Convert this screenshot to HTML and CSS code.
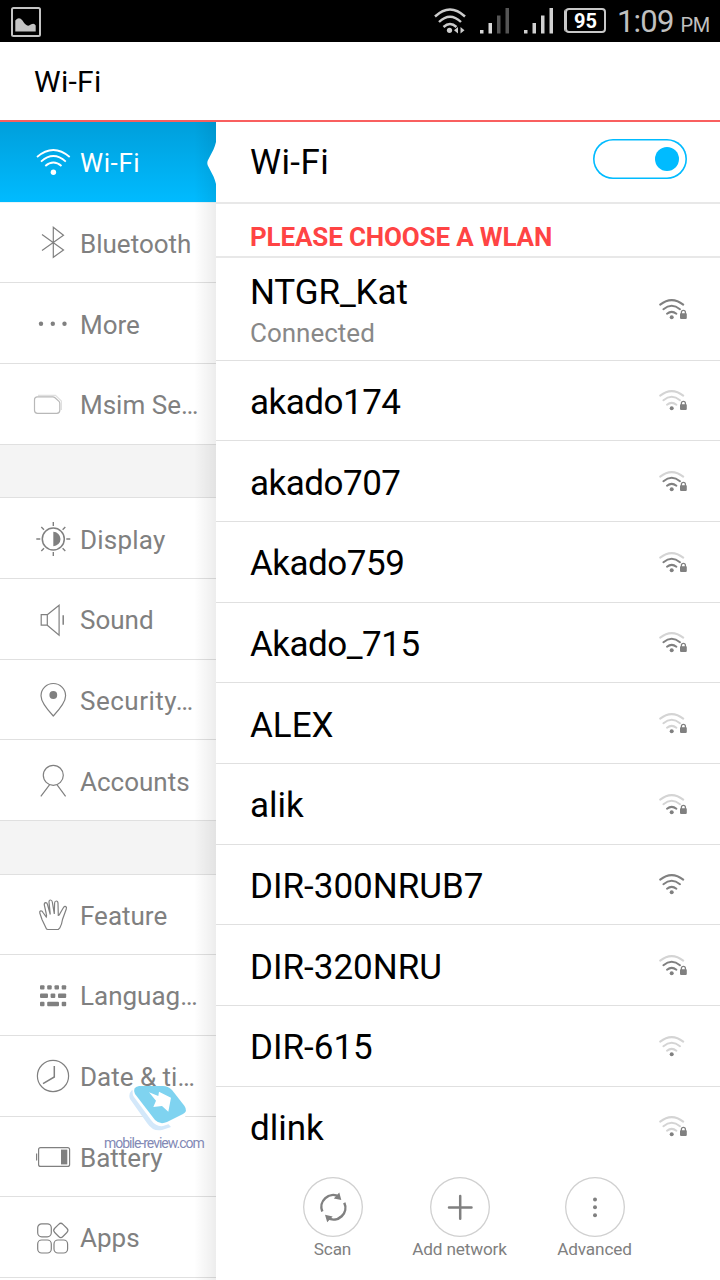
FILE: index.html
```html
<!DOCTYPE html>
<html lang="en">
<head>
  <meta charset="UTF-8">
  <title>Wi-Fi</title>
  <link rel="stylesheet" href="styles.css">
</head>
<body>

  <!-- shared shapes -->
  <svg class="defs" width="0" height="0">
    <symbol id="signal" viewBox="0 0 28 24">
      <path class="arc arc-3" d="M1.2 7.6Q12.7 -1.4 24.2 7.6"/>
      <path class="arc arc-2" d="M4.4 12.2Q12.7 5.4 21 12.2"/>
      <path class="arc arc-1" d="M8 16.7Q12.7 13 17.4 16.7"/>
      <circle cx="12.7" cy="20.2" r="2"/>
    </symbol>
    <symbol id="lock" viewBox="0 0 28 24">
      <rect x="21" y="16.3" width="6.8" height="5.6" rx=".8"/>
      <path class="shackle" d="M22.4 17V15.3a2 2 0 0 1 4 0V17"/>
    </symbol>
  </svg>

  <!-- STATUS BAR -->
  <div class="status-bar">
    <svg class="status-picture" width="30" height="30" viewBox="0 0 30 30">
      <rect x="1" y="1" width="28" height="28" rx="1.5" fill="none" stroke="#c4c4c4" stroke-width="2"/>
      <path d="M4.3 24.5V13.5Q8 9 11.5 13.5Q15 19.5 18 18.5Q23 15 24.7 18.5V24.5Z" fill="#c4c4c4"/>
    </svg>
    <div class="status-icons">
      <svg width="32" height="28" viewBox="0 0 32 28">
        <g fill="none" stroke="#ccc" stroke-width="2.4">
          <path d="M1 8.5Q16 -5.5 31 8.5"/>
          <path d="M5 14Q16 3.5 27 14"/>
          <path d="M9.5 19Q16 13 22.5 19"/>
        </g>
        <circle cx="15.5" cy="22.3" r="2.6" fill="#ccc"/>
        <path d="M24 19V25.5L20 22.3ZM26.5 19V25.5L30.5 22.3Z" fill="#ccc"/>
      </svg>
      <svg class="bars" width="30" height="26" viewBox="0 0 30 26">
        <path d="M0 22h3.5v3.5H0zM8.5 15H12v10.5H8.5z" fill="#d8d8d8"/>
        <path d="M17 7.5h3.5v18H17zM25.5 0H29v25.5h-3.5z" fill="#555"/>
      </svg>
      <svg class="bars" width="30" height="26" viewBox="0 0 30 26">
        <path d="M0 22h3.5v3.5H0zM8.5 15H12v10.5H8.5zM17 7.5h3.5v18H17zM25.5 0H29v25.5h-3.5z" fill="#d0d0d0"/>
      </svg>
      <div class="battery">95</div>
      <div class="clock">1:09 <small>PM</small></div>
    </div>
  </div>

  <div class="title-bar"><h1>Wi-Fi</h1></div>

  <div class="content">

    <!-- SIDEBAR -->
    <div class="sidebar">
      <div class="menu-item active">
        <svg viewBox="0 0 40 40">
          <path d="M4 15Q20.3 1 36.7 15M8 19.6Q20.3 8.4 32.8 19.6M12.3 24Q20.4 17 28.5 24"/>
          <circle class="solid" cx="20.4" cy="30.3" r="2.7"/>
        </svg>
        <span>Wi-Fi</span>
      </div>
      <div class="menu-item">
        <svg viewBox="0 0 40 40"><path d="M9 11.5L30.5 27L20.3 34.3V4.3L30.5 12.3L9 27.5"/></svg>
        <span>Bluetooth</span>
      </div>
      <div class="menu-item">
        <svg viewBox="0 0 40 40">
          <g class="solid"><circle cx="8" cy="19.7" r="2.2"/><circle cx="19.8" cy="19.7" r="2.2"/><circle cx="31.5" cy="19.7" r="2.2"/></g>
        </svg>
        <span>More</span>
      </div>
      <div class="menu-item">
        <svg viewBox="0 0 40 40">
          <path class="faint" d="M5 10.3H22.5L28.4 16V25"/>
          <path class="pale" d="M4.5 11.8H19.8Q21 11.8 22 12.7L26 16.3Q26.8 17.2 26.8 18.5V25.3Q26.8 28.3 23.8 28.3H4.5Q1.5 28.3 1.5 25.3V14.8Q1.5 11.8 4.5 11.8Z"/>
        </svg>
        <span>Msim Se…</span>
      </div>

      <div class="divider"></div>

      <div class="menu-item">
        <svg viewBox="0 0 40 40">
          <circle cx="20.3" cy="20" r="11" stroke-width="1.5"/>
          <path class="solid" d="M20.3 12.8a7.2 7.2 0 0 1 0 14.4Z"/>
          <path d="M20.3 3V7M20.3 33V37M3.3 20H7.3M33.3 20H37.3M8.3 8L11 10.7M32.3 8L29.6 10.7M8.3 32L11 29.3M32.3 32L29.6 29.3" stroke-width="1.4"/>
        </svg>
        <span class="wide">Display</span>
      </div>
      <div class="menu-item">
        <svg viewBox="0 0 40 40">
          <path d="M8.2 14.7H14.3V25.2H8.2ZM14.3 14.7L26.1 5.2V35.2L14.3 25.2"/>
          <path d="M30.2 15.2V24.8" stroke-width="1.5"/>
        </svg>
        <span>Sound</span>
      </div>
      <div class="menu-item">
        <svg viewBox="0 0 40 40">
          <path d="M20.3 36Q8 23 8 15.8A12.3 12.3 0 0 1 32.6 15.8Q32.6 23 20.3 36Z"/>
          <circle class="solid" cx="20.3" cy="15" r="3.9"/>
        </svg>
        <span class="wider">Security…</span>
      </div>
      <div class="menu-item">
        <svg viewBox="0 0 40 40">
          <circle cx="20.3" cy="14.3" r="10"/>
          <path d="M16.5 23.8L7.8 35.3M24.1 23.8L32.6 35.3"/>
        </svg>
        <span>Accounts</span>
      </div>

      <div class="divider"></div>

      <div class="menu-item">
        <svg viewBox="0 0 40 40">
          <path d="M13.5 34L9 24.5L6.8 18Q6.5 15.8 8 15.8Q9.3 15.8 10 17.5L13.3 22Q13.8 21 13.3 19L11.3 10Q11 7.8 12.7 7.6Q14 7.6 14.5 9.5L17.3 19.5L16 7Q16 5 17.5 5Q19 5 19.3 7L21.3 19L21.6 8Q21.8 6 23.3 6Q25 6 25 8.3L25.3 20.5Q26.3 20.5 27 18.5L30.5 12.5Q31.5 11 32.8 11.6Q34 12.2 33.2 14.3L29.5 24.5Q28.8 29.5 26.8 33L25.3 34.5H14.8Z"/>
        </svg>
        <span>Feature</span>
      </div>
      <div class="menu-item">
        <svg viewBox="0 0 40 40">
          <g class="solid">
            <rect x="7" y="9.2" width="4.5" height="4.4" rx="1"/><rect x="14.2" y="9.2" width="4.5" height="4.4" rx="1"/>
            <rect x="21.5" y="9.2" width="4.5" height="4.4" rx="1"/><rect x="28.7" y="9.2" width="4.5" height="4.4" rx="1"/>
            <rect x="7" y="17.6" width="8" height="4.4" rx="1"/><rect x="17.6" y="17.6" width="4.7" height="4.4" rx="1"/>
            <rect x="25" y="17.6" width="8.2" height="4.4" rx="1"/><rect x="7" y="25.8" width="4.5" height="4.4" rx="1"/>
            <rect x="14.2" y="25.8" width="11.8" height="4.4" rx="1"/><rect x="28.7" y="25.8" width="4.5" height="4.4" rx="1"/>
          </g>
        </svg>
        <span>Languag…</span>
      </div>
      <div class="menu-item">
        <svg viewBox="0 0 40 40">
          <circle cx="20" cy="20" r="15.6"/>
          <path d="M21.3 10V21L10 27.6" stroke-width="1.5"/>
        </svg>
        <span>Date &amp; ti…</span>
      </div>
      <div class="menu-item">
        <svg viewBox="0 0 40 40">
          <rect x="5.6" y="10.6" width="31" height="18.8" rx="2"/>
          <rect class="solid" x="28" y="12.6" width="6.3" height="14.8"/>
          <path d="M3.6 16.5V23.5"/>
        </svg>
        <span>Battery</span>
      </div>
      <div class="menu-item">
        <svg viewBox="0 0 40 40">
          <rect x="4.7" y="5.8" width="13.6" height="13" rx="4"/>
          <rect x="4.7" y="22" width="13.6" height="13" rx="4"/>
          <rect x="21" y="22" width="13.6" height="13" rx="4"/>
          <rect x="22" y="6.6" width="11.6" height="11.6" rx="3" transform="rotate(45 27.8 12.4)"/>
        </svg>
        <span>Apps</span>
      </div>

      <div class="shade"></div>
      <svg class="pointer" width="9" height="42" viewBox="0 0 9 42"><path d="M9 0V42Q8 38 6.5 34.5L.8 23.5Q-.2 21 .8 18.5L6.5 7.5Q8 4 9 0Z"/></svg>

      <div class="watermark">
        <svg width="60" height="50" viewBox="0 0 60 50">
          <path d="M3 5Q-1 9 1 14L18 38Q24 47 33 45L42 42L20 18Z" fill="#d3e8fa"/>
          <path d="M5 3Q2 7 5 12L22 35Q27 42 34 41L52 35Q58 32 57 27L45 12Z" fill="#fff"/>
          <path d="M10 1H34Q39 1 43 5L55.5 21Q59 26 54 29L38 37Q31 40 26 35L6 9Q3 2 10 1Z" fill="#7fd3f0"/>
          <path d="M20 7.3L29.3 11L30 6.7L42 12.7L39.3 26.7L33 21L24.3 22L27 15.7Z" fill="#fff"/>
        </svg>
        <div class="watermark-text">mobile-review.com</div>
      </div>
    </div>

    <!-- NETWORKS -->
    <div class="main">
      <div class="switch-row">
        <span class="name wide">Wi-Fi</span>
        <div class="toggle"></div>
      </div>
      <div class="section-title"><span>PLEASE CHOOSE A WLAN</span></div>

      <div class="network connected">
        <div>
          <div class="name">NTGR_Kat</div>
          <div class="state">Connected</div>
        </div>
        <svg class="wifi level-3"><use href="#signal"/><use href="#lock"/></svg>
      </div>
      <div class="network"><span class="name tight">akado174</span><svg class="wifi level-0"><use href="#signal"/><use href="#lock"/></svg></div>
      <div class="network"><span class="name tight">akado707</span><svg class="wifi level-2"><use href="#signal"/><use href="#lock"/></svg></div>
      <div class="network"><span class="name tight">Akado759</span><svg class="wifi level-2"><use href="#signal"/><use href="#lock"/></svg></div>
      <div class="network"><span class="name tight">Akado_715</span><svg class="wifi level-2"><use href="#signal"/><use href="#lock"/></svg></div>
      <div class="network"><span class="name">ALEX</span><svg class="wifi level-0"><use href="#signal"/><use href="#lock"/></svg></div>
      <div class="network"><span class="name">alik</span><svg class="wifi level-1"><use href="#signal"/><use href="#lock"/></svg></div>
      <div class="network"><span class="name">DIR-300NRUB7</span><svg class="wifi level-3"><use href="#signal"/></svg></div>
      <div class="network"><span class="name">DIR-320NRU</span><svg class="wifi level-2"><use href="#signal"/><use href="#lock"/></svg></div>
      <div class="network"><span class="name">DIR-615</span><svg class="wifi level-0"><use href="#signal"/></svg></div>
      <div class="network last"><span class="name">dlink</span><svg class="wifi level-0"><use href="#signal"/><use href="#lock"/></svg></div>

      <div class="actions">
        <div class="action">
          <div class="circle">
            <svg width="60" height="60" viewBox="0 0 60 60">
              <path d="M19.3 34.5A11.9 11.9 0 0 1 36 19.5M41.3 25.7A11.9 11.9 0 0 1 25 41.2"/>
              <path class="tip" d="M36.3 15.5L38.3 23L30.8 21.5ZM24.2 45.3L22 37.8L29.7 39.5Z"/>
            </svg>
          </div>
          <span>Scan</span>
        </div>
        <div class="action">
          <div class="circle"><svg width="60" height="60" viewBox="0 0 60 60"><path d="M19 30.5H41.5M30.2 19V41.8" stroke-linecap="round"/></svg></div>
          <span>Add network</span>
        </div>
        <div class="action">
          <div class="circle"><svg width="60" height="60" viewBox="0 0 60 60"><g class="tip"><circle cx="30" cy="22.5" r="2"/><circle cx="30" cy="30.3" r="2"/><circle cx="30" cy="38.3" r="2"/></g></svg></div>
          <span>Advanced</span>
        </div>
      </div>
    </div>

  </div>

</body>
</html>
```

FILE: styles.css
```css
* {
  box-sizing: border-box;
}

body {
  margin: 0;
  width: 720px;
  height: 1280px;
  overflow: hidden;
  font-family: Roboto, sans-serif;
  background: #fff;
  color: #000;
}

svg {
  display: block;
  flex-shrink: 0;
}

.defs {
  position: absolute;
}

/* status bar */
.status-bar {
  height: 42px;
  background: #000;
  display: flex;
  justify-content: space-between;
  align-items: flex-start;
  padding: 7px 11px 0;
}

.status-icons {
  display: flex;
  align-items: flex-start;
}

.bars {
  margin: 1px 0 0 14px;
}

.status-icons > svg:first-child {
  margin-top: 1px;
}

.battery {
  width: 41px;
  height: 25px;
  margin: 1px 0 0 11px;
  border: 2px solid #c8c8c8;
  border-radius: 4px;
  box-shadow: -2px 0 0 -1px #c8c8c8;
  color: #fff;
  font-size: 20px;
  font-weight: bold;
  line-height: 22px;
  text-align: center;
}

.clock {
  width: 92px;
  margin-left: 11px;
  color: #c0c0c0;
  font-size: 31px;
  letter-spacing: -0.8px;
  line-height: 30px;
  white-space: nowrap;
}

.clock small {
  font-size: 20px;
  letter-spacing: -0.3px;
}

.title-bar {
  height: 80px;
  border-bottom: 2px solid #f95f5f;
  padding-left: 34px;
  display: flex;
  align-items: center;
}

h1 {
  margin: 0;
  font-size: 30px;
  font-weight: normal;
  letter-spacing: 0.3px;
}

.content {
  display: flex;
  height: 1158px;
}

/* sidebar */
.sidebar {
  position: relative;
  width: 216px;
  flex-shrink: 0;
}

.menu-item {
  height: 80.667px;
  padding: 1.5px 0 0 33px;
  display: flex;
  align-items: center;
  gap: 7px;
  border-bottom: 1.5px solid #e0e0e0;
  color: #808080;
  font-size: 26px;
  white-space: nowrap;
}

.menu-item span {
  padding-top: 1.4px;
}

.menu-item .wide {
  letter-spacing: 0.2px;
}

.menu-item .wider {
  letter-spacing: 0.5px;
}

.menu-item svg {
  width: 40px;
  height: 40px;
  fill: none;
  stroke: #808080;
  stroke-width: 1.2;
}

.menu-item .solid {
  fill: #808080;
  stroke: none;
}

.menu-item .pale {
  stroke: #b8b8b8;
}

.menu-item .faint {
  stroke: #e0e0e0;
}

.menu-item.active {
  padding-top: 0;
  background: linear-gradient(#009fdb, #00bbff);
  border-bottom-color: #e8f4f8;
  color: #fff;
}

.menu-item.active span {
  letter-spacing: 0.6px;
}

.menu-item.active svg {
  stroke: #fff;
  stroke-width: 1.8;
}

.menu-item.active .solid {
  fill: #fff;
}

.divider {
  height: 53.667px;
  background: #f4f4f4;
  border-bottom: 1.5px solid #e0e0e0;
}

.shade {
  position: absolute;
  top: 0;
  right: 0;
  width: 22px;
  height: 100%;
  background: linear-gradient(to right, rgba(0, 0, 0, 0), rgba(0, 0, 0, 0.07));
}

.pointer {
  position: absolute;
  top: 20px;
  right: 0;
  fill: #fff;
}

.watermark {
  position: absolute;
  left: 104px;
  top: 963px;
  width: 101px;
}

.watermark svg {
  margin-left: 25px;
}

.watermark-text {
  color: #8289b5;
  font-size: 14px;
  letter-spacing: -1px;
  line-height: 16px;
  white-space: nowrap;
}

/* network list */
.main {
  flex: 1;
}

.name {
  padding-top: 5px;
  font-size: 35px;
  line-height: 40px;
}

.name.tight {
  letter-spacing: -0.5px;
}

.name.wide {
  padding-top: 1px;
  letter-spacing: 0.4px;
}

.switch-row {
  height: 82px;
  padding: 0 33px 0 34px;
  display: flex;
  align-items: center;
  justify-content: space-between;
  border-bottom: 2px solid #e8e8e8;
}

.toggle {
  width: 94px;
  height: 40px;
  margin-bottom: 7px;
  padding-right: 8px;
  border-radius: 20px;
  box-shadow: inset 0 0 0 1.6px #00bbff;
  display: flex;
  align-items: center;
  justify-content: flex-end;
}

.toggle::after {
  content: "";
  width: 24px;
  height: 24px;
  border-radius: 50%;
  background: #00bbff;
}

.section-title {
  height: 54px;
  padding: 18px 34px 0;
  border-bottom: 2px solid #e8e8e8;
  color: #ff4444;
  font-size: 26px;
  font-weight: bold;
  letter-spacing: -0.15px;
  line-height: 30px;
}

.network {
  height: 80.667px;
  padding: 0 33px 0 34px;
  display: flex;
  align-items: center;
  justify-content: space-between;
  border-bottom: 1.5px solid #e0e0e0;
}

.network.connected {
  height: 102.667px;
}

.network.connected .name {
  padding-top: 9px;
  letter-spacing: -0.1px;
}

.network.last {
  border-bottom-color: transparent;
}

.state {
  color: #888;
  font-size: 26px;
  line-height: 41px;
}

.wifi {
  width: 28px;
  height: 24px;
  fill: #808080;
}

.arc {
  fill: none;
  stroke-width: 2;
  stroke-linecap: round;
}

.shackle {
  fill: none;
  stroke: #808080;
  stroke-width: 1.3;
}

/* lit arcs per signal level */
.level-1 {
  --one: #808080;
}

.level-2 {
  --one: #808080;
  --two: #808080;
}

.level-3 {
  --one: #808080;
  --two: #808080;
  --three: #808080;
}

.arc-1 {
  stroke: var(--one, #d4d4d4);
}

.arc-2 {
  stroke: var(--two, #d4d4d4);
}

.arc-3 {
  stroke: var(--three, #d4d4d4);
}

/* bottom actions */
.actions {
  display: flex;
  gap: 5px;
  padding: 10px 0 0 53px;
}

.action {
  width: 127px;
  display: flex;
  flex-direction: column;
  align-items: center;
  color: #808080;
  font-size: 17.2px;
  letter-spacing: -0.15px;
  line-height: 25px;
}

.action:nth-child(2) {
  width: 117px;
}

.action:last-child {
  margin-left: 8px;
}

.circle {
  width: 60px;
  height: 60px;
  border-radius: 50%;
  box-shadow: inset 0 0 0 1.3px #d0d0d0;
}

.circle svg {
  fill: none;
  stroke: #808080;
  stroke-width: 2.5;
}

.circle .tip {
  fill: #808080;
  stroke: none;
}
```
